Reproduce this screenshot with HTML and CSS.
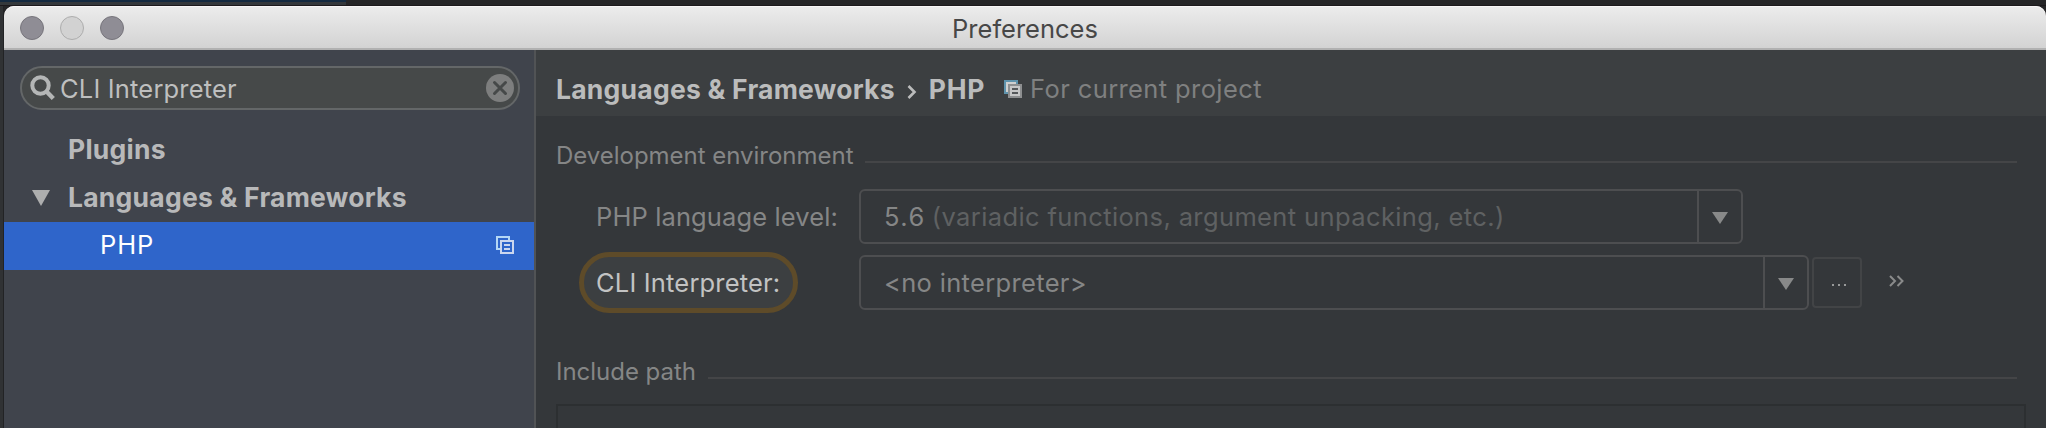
FILE: index.html
```html
<!DOCTYPE html>
<html lang="en">
<head>
<meta charset="utf-8">
<title>Preferences</title>
<link rel="stylesheet" href="styles.css">
</head>
<body>
<div class="desktop">
  <div class="backdrop"><span class="backdrop-tab"></span></div>
  <div class="window">
    <header class="titlebar">
      <div class="lights"><span class="light"></span><span class="light light-off"></span><span class="light"></span></div>
      <h1 class="title">Preferences</h1>
    </header>
    <div class="body">
      <aside class="sidebar">
        <div class="search">
          <svg class="search-icon" width="26" height="26" viewBox="0 0 26 26"><circle cx="10.5" cy="10.5" r="8.2" fill="none" stroke="#b4b6b6" stroke-width="4"/><path d="M16 16l7.3 7.5" stroke="#b4b6b6" stroke-width="4.4"/></svg>
          <span class="search-text">CLI Interpreter</span>
          <svg width="28" height="28" viewBox="0 0 28 28"><circle cx="14" cy="14" r="14" fill="#7d7e7e"/><path d="M8.5 8.500l11 11M19.500 8.500l-11 11" stroke="#464949" stroke-width="3" stroke-linecap="round"/></svg>
        </div>
        <ul class="tree">
          <li class="node"><span class="node-arrow"></span><span class="strong">Plugins</span></li>
          <li class="node"><span class="node-arrow"><svg width="18" height="16" viewBox="0 0 18 16"><path d="M0 0h18L9 16z" fill="#adaeae"/></svg></span><span class="strong">Languages &amp; Frameworks</span></li>
          <li class="node node-selected"><span class="leaf">PHP</span>
            <svg class="scope" width="18" height="18" viewBox="0 0 18 18"><path d="M4 13H1V1h12v3" fill="none" stroke="#b4d7f5" stroke-width="2"/><path d="M5 5h12v12H5zM8 9h6M8 13h6" fill="none" stroke="#cbd6ee" stroke-width="2"/></svg></li>
        </ul>
      </aside>
      <main class="content">
        <div class="crumbs">
          <span class="strong crumb">Languages &amp; Frameworks</span>
          <svg class="chevron" width="10" height="14" viewBox="0 0 10 14"><path d="M1.500 1Q5.500 5 7.500 7Q5.500 9 1.500 13" fill="none" stroke="#bbbcbc" stroke-width="2.600"/></svg>
          <span class="strong crumb-last">PHP</span>
          <svg class="crumb-scope" width="18" height="18" viewBox="0 0 18 18"><path d="M0 0h14v4H4v10H0z" fill="#5f93ac"/><path d="M2 2h10v2H4v8H2z" fill="#d0d0cf"/><path d="M4 4h14v14H4z" fill="#8d8f90"/><path d="M6 6h10v10H6z" fill="#c6c7c7"/><path d="M8 8h6v2H8zM8 12h6v2H8z" fill="#55585a"/></svg>
          <span class="scope-note">For current project</span>
        </div>
        <div class="section section-env"><h2 class="section-title">Development environment</h2><span class="rule"></span></div>
        <div class="form">
          <div class="row">
            <label class="label level-label">PHP language level:</label>
            <div class="combo combo-level"><span class="combo-text"><span class="version">5.6</span><span class="hint">(variadic functions, argument unpacking, etc.)</span></span><span class="combo-arrow"><svg width="16" height="12" viewBox="0 0 16 12"><path d="M0 0h16L8 12z" fill="#888989"/></svg></span></div>
          </div>
          <div class="row">
            <label class="label"><span class="pill">CLI Interpreter:</span></label>
            <div class="combo combo-cli"><span class="combo-text">&lt;no interpreter&gt;</span><span class="combo-arrow"><svg width="16" height="12" viewBox="0 0 16 12"><path d="M0 0h16L8 12z" fill="#888989"/></svg></span></div>
            <button class="more" type="button"><svg width="14" height="2" viewBox="0 0 14 2"><path d="M0 0h2v2H0zM6 0h2v2H6zM12 0h2v2h-2z" fill="#989999"/></svg></button>
            <svg class="expand" width="15" height="12" viewBox="0 0 15 12"><path d="M1 1l5 5-5 5M8.500 1l5 5-5 5" fill="none" stroke="#8a8b8b" stroke-width="2"/></svg>
          </div>
        </div>
        <div class="section section-include"><h2 class="section-title">Include path</h2><span class="rule"></span></div>
        <div class="path-list"></div>
      </main>
    </div>
  </div>
</div>
</body>
</html>
```
FILE: styles.css
```css
* { box-sizing: border-box; }
body { margin: 0; overflow: hidden; font: 25.5px/30px Inter, "Liberation Sans", sans-serif; letter-spacing: .18px; }
svg { display: block; flex: none; }

.desktop {
  height: 428px;
  display: flex;
  flex-direction: column;
  background: linear-gradient(90deg, #303234 3px, #222325 3px 4px, #252527 4px);
}
.backdrop { height: 6px; flex: none; display: flex; background: #252527; border-bottom: 1px solid #1c191c; }
.backdrop-tab { width: 346px; height: 5px; background: linear-gradient(#142a40 2px, #34383b 2px); }

.window { flex: 1; margin-left: 4px; display: flex; flex-direction: column; min-height: 0; }
.titlebar {
  height: 44px;
  flex: none;
  display: grid;
  grid-template-columns: 1fr auto 1fr;
  align-items: center;
  padding: 0 16px 0 16px;
  border-radius: 10px 10px 0 0;
  border-bottom: 2px solid #b1b1b1;
  background: linear-gradient(#ececec, #d3d3d3);
  box-shadow: inset 0 1px #f8f6f7;
}
.lights { display: flex; gap: 16px; padding-top: 2px; }
.light { width: 24px; height: 24px; border-radius: 50%; background: #8f8d95; border: 1px solid #77757c; }
.light-off { background: #d2d2d2; border-color: #adadad; }
.title { margin: 0; padding: 3px 0 0 0; font-size: 25.5px; font-weight: 400; letter-spacing: 0; color: #474747; }

.body { flex: 1; display: flex; min-height: 0; }
.sidebar { width: 532px; flex: none; background: #40444c; border-right: 2px solid #515355; padding-top: 16px; }
.search {
  height: 44px;
  margin: 0 14px 0 16px;
  padding: 0 4px 0 8px;
  display: flex;
  align-items: center;
  background: #464949;
  border: 2px solid #646768;
  border-radius: 22px;
  color: #bebfbf;
}
.search-text { flex: 1; padding: 1px 0 0 4px; }
.tree { list-style: none; margin: 16px 0 0; padding: 0; }
.node { height: 48px; display: flex; align-items: center; padding: 0 20px 3px 28px; color: #b8b9ba; }
.node-arrow { width: 36px; padding-top: 3px; flex: none; }
.strong { font-size: 26.5px; font-weight: 700; letter-spacing: .24px; }
.node-selected { background: #2f65ca; color: #fff; padding-bottom: 2px; }
.leaf { flex: 1; padding-left: 68px; letter-spacing: .9px; }

.content { flex: 1; min-width: 0; background: #34373a; color: #858686; display: flex; flex-direction: column; }
.crumbs { height: 66px; flex: none; background: #3c3f41; display: flex; align-items: center; padding: 11px 0 0 20px; color: #bbbcbc; }
.chevron { margin: 7px 12px 0 12px; }
.crumb-last { letter-spacing: .7px; }
.crumb-scope { margin-left: 19px; }
.scope-note { margin-left: 8px; letter-spacing: .39px; color: #7f8080; }

.section { display: flex; align-items: center; gap: 12px; margin: 24px 29px 0 20px; }
.section-title { margin: 0; font-size: 24px; font-weight: 400; letter-spacing: -.02px; color: #858686; }
.rule { flex: 1; height: 2px; margin-top: 12px; background: #444547; }
.section-env { margin-top: 25px; }
.section-include { margin-top: 47px; }

.form { margin-top: 18px; display: flex; flex-direction: column; gap: 11px; }
.row { display: flex; align-items: center; height: 55px; }
.label { width: 323px; flex: none; display: flex; }
.level-label { padding-left: 60px; letter-spacing: .12px; }
.pill {
  height: 61px;
  width: 219px;
  flex: none;
  margin-left: 43px;
  padding-left: 12px;
  display: flex;
  align-items: center;
  border: 5px solid #5e4b29;
  border-radius: 31px;
  background: #3c3f41;
  color: #c2c3c3;
}
.combo { height: 55px; display: flex; border: 2px solid #4d4e50; border-radius: 6px; flex: none; }
.combo-level { width: 884px; }
.combo-cli { width: 950px; }
.combo-text { flex: 1; display: flex; align-items: center; padding-left: 23px; letter-spacing: .33px; }
.version { letter-spacing: 1.5px; }
.hint { margin-left: 6px; color: #5f6162; letter-spacing: .38px; }
.combo-arrow { width: 44px; border-left: 2px solid #4d4e50; display: flex; align-items: center; justify-content: center; padding-top: 2px; }
.more { width: 50px; height: 51px; margin-left: 3px; padding: 4px 0 0 4px; display: flex; align-items: center; justify-content: center; background: none; border: 2px solid #424446; border-radius: 4px; }
.expand { margin: 0 0 3px 27px; }

.path-list { flex: 1; margin: 17px 20px 0; border: 2px solid #2c2f31; border-bottom: 0; }
```
